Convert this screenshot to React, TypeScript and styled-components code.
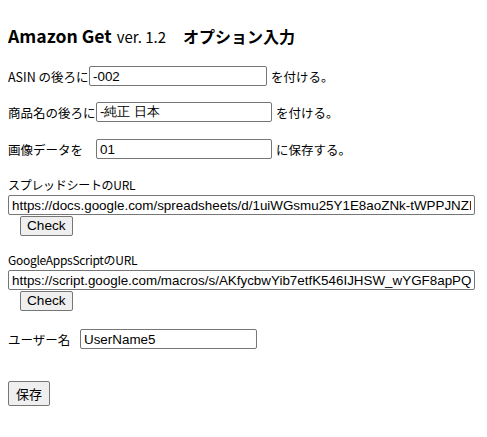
import React from 'react'
import styled, { createGlobalStyle } from 'styled-components'

const GlobalStyle = createGlobalStyle`
  body {
    margin: 8px;
    background: #fff;
    color: #000;
    font-family: "Noto Sans CJK JP", "DejaVu Sans", sans-serif;
  }
`

const Title = styled.h1`
  margin: 17px 0 0;
  height: 22px;
  display: flex;
  align-items: baseline;
  font-size: 17.6px;
  font-weight: 700;
  line-height: 22px;
`

const Version = styled.span`
  margin-left: 5px;
  font-size: 15px;
  font-weight: 400;
`

const Subtitle = styled.span`
  margin-left: 17px;
  font-size: 16px;
`

const Row = styled.div<{ $top: number }>`
  display: flex;
  align-items: center;
  margin-top: ${(p) => p.$top}px;
  height: 20px;
  font-size: 12.5px;
`

const Label = styled.span<{ $width: number }>`
  width: ${(p) => p.$width}px;
  flex: none;
  white-space: nowrap;
`

const TextInput = styled.input<{ $width: number }>`
  display: block;
  box-sizing: border-box;
  width: ${(p) => p.$width}px;
  height: 20px;
  margin: 0;
  padding: 1px 3px;
  border: 1px solid #767676;
  border-radius: 2px;
  font-family: "Liberation Sans", Arial, sans-serif;
  font-size: 13.4px;
  color: #000;
  background: #fff;
  outline: none;
`

const Suffix = styled.span`
  margin-left: 4px;
  white-space: nowrap;
`

const Block = styled.div<{ $top: number }>`
  margin-top: ${(p) => p.$top}px;
`

const SmallLabel = styled.div`
  font-size: 12px;
  line-height: 16px;
  height: 16px;
  margin-bottom: 2px;
  letter-spacing: -0.3px;
  white-space: nowrap;
`

const Button = styled.button<{ $cjk?: boolean }>`
  box-sizing: border-box;
  display: block;
  height: ${(p) => (p.$cjk ? 25 : 20)}px;
  margin: ${(p) => (p.$cjk ? '0' : '1px 0 0 12px')};
  padding: 0 ${(p) => (p.$cjk ? 7 : 6)}px;
  border: 1px solid #767676;
  border-radius: 2px;
  background: #efefef;
  color: #000;
  font-family: ${(p) =>
    p.$cjk ? '"Noto Sans CJK JP", sans-serif' : '"Liberation Sans", Arial, sans-serif'};
  font-size: ${(p) => (p.$cjk ? 13 : 13.6)}px;
  line-height: 1;
`

export default function App() {
  return (
    <>
      <GlobalStyle />
      <Title>
        Amazon Get<Version>ver. 1.2</Version>
        <Subtitle>オプション入力</Subtitle>
      </Title>

      <Row $top={19}>
        <Label $width={81}>ASIN の後ろに</Label>
        <TextInput $width={178} defaultValue="-002" />
        <Suffix>を付ける。</Suffix>
      </Row>

      <Row $top={16}>
        <Label $width={88}>商品名の後ろに</Label>
        <TextInput $width={176} defaultValue="-純正 日本" />
        <Suffix>を付ける。</Suffix>
      </Row>

      <Row $top={17}>
        <Label $width={88}>画像データを</Label>
        <TextInput $width={176} defaultValue="01" />
        <Suffix>に保存する。</Suffix>
      </Row>

      <Block $top={18}>
        <SmallLabel>スプレッドシートのURL</SmallLabel>
        <TextInput
          $width={467}
          defaultValue="https://docs.google.com/spreadsheets/d/1uiWGsmu25Y1E8aoZNk-tWPPJNZF"
        />
        <Button>Check</Button>
      </Block>

      <Block $top={16}>
        <SmallLabel>GoogleAppsScriptのURL</SmallLabel>
        <TextInput
          $width={467}
          defaultValue="https://script.google.com/macros/s/AKfycbwYib7etfK546IJHSW_wYGF8apPQr"
        />
        <Button>Check</Button>
      </Block>

      <Row $top={18}>
        <Label $width={72}>ユーザー名</Label>
        <TextInput $width={177} defaultValue="UserName5" />
      </Row>

      <Block $top={32}>
        <Button $cjk>保存</Button>
      </Block>
    </>
  )
}
